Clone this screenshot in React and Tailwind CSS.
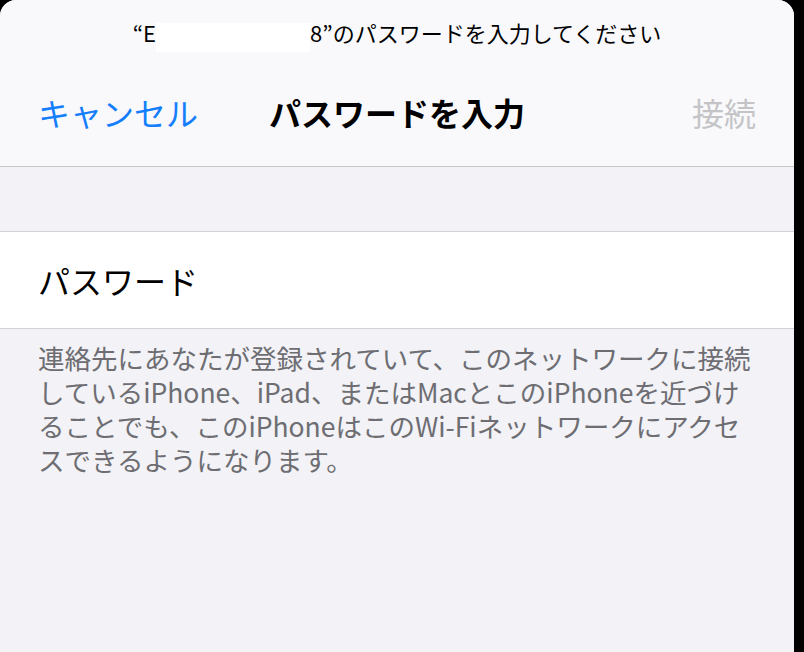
export default function App() {
    const font = { fontFamily: '"Noto Sans CJK JP", "Noto Sans", sans-serif' };
    return (
        <div className="h-[652px] w-[804px] overflow-hidden bg-black" style={font}>
            <div className="flex h-full w-[794px] flex-col overflow-hidden rounded-t-[16px] bg-[#f2f2f7]">
                {/* header */}
                <div className="flex h-[167px] flex-col border-b border-[#c8c7cc] bg-[#f9f9fb]">
                    <div className="flex h-[64px] items-center justify-center whitespace-nowrap text-[22px] leading-[30px] text-black">
                        <span>“E</span>
                        <span className="inline-block h-[29px] w-[154px] translate-y-[5px] bg-white" />
                        <span>8”のパスワードを入力してください</span>
                    </div>
                    <div className="flex h-[96px] items-center px-[38px] text-[32px] leading-[40px]">
                        <div className="flex-1 text-[#157efb]">キャンセル</div>
                        <div className="font-bold text-black">パスワードを入力</div>
                        <div className="flex-1 text-right text-[#c4c4c7]">接続</div>
                    </div>
                </div>

                <div className="h-[64px]" />

                {/* password row */}
                <div className="flex h-[98px] items-center border-y border-[#d1d1d6] bg-white px-[38px] text-[32px] text-black">
                    パスワード
                </div>

                {/* footer */}
                <p className="whitespace-nowrap px-[38px] pt-[12px] text-[26.5px] leading-[34px] text-[#6d6d72]">
                    連絡先にあなたが登録されていて、このネットワークに接続
                    <br />
                    しているiPhone、iPad、またはMacとこのiPhoneを近づけ
                    <br />
                    ることでも、このiPhoneはこのWi-Fiネットワークにアクセ
                    <br />
                    スできるようになります。
                </p>
            </div>
        </div>
    );
}
